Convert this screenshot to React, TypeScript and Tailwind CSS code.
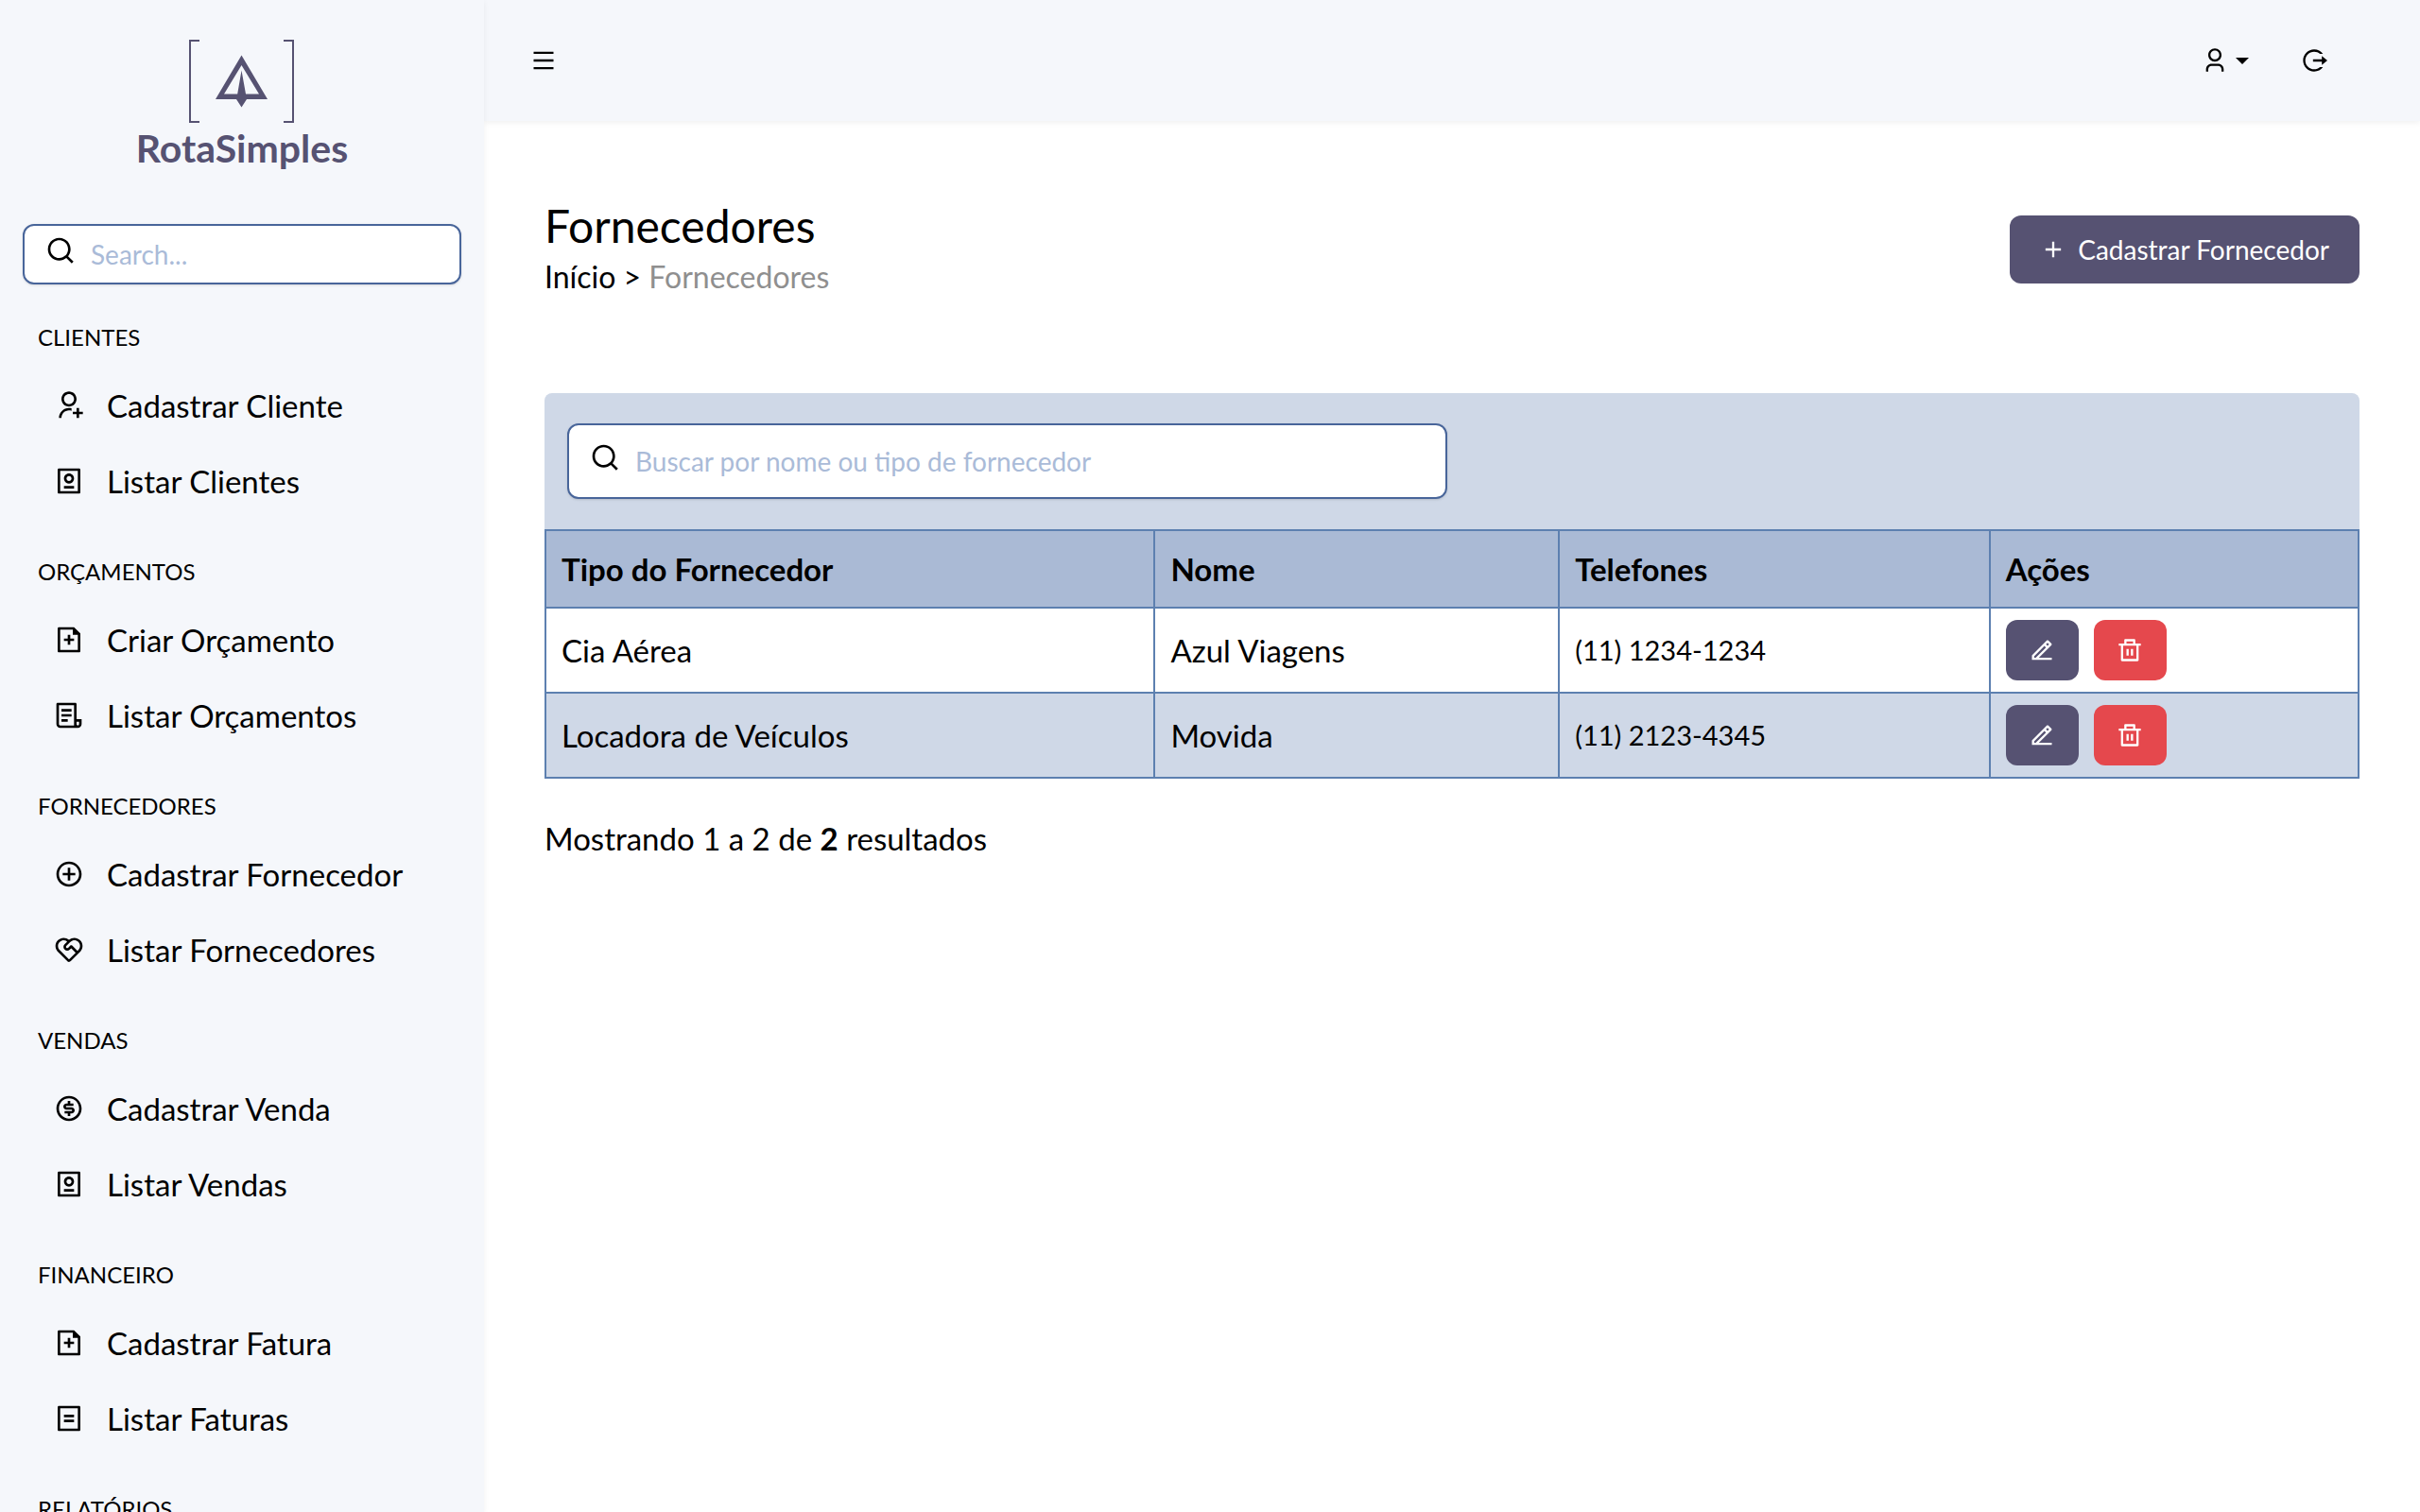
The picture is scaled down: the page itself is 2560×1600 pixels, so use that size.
import { useCallback, useState } from "react";
import type { IconType } from "react-icons";
import {
  RiAddCircleLine,
  RiAddLine,
  RiBillLine,
  RiDeleteBinLine,
  RiEdit2Line,
  RiFileAddLine,
  RiFileList3Line,
  RiLogoutCircleRLine,
  RiMenuLine,
  RiMoneyDollarCircleLine,
  RiPassportLine,
  RiSearchLine,
  RiServiceLine,
  RiUser3Line,
  RiUserAddLine,
} from "react-icons/ri";

type NavItem = { label: string; icon: IconType };

const sections: { title: string; items: NavItem[] }[] = [
  {
    title: "Clientes",
    items: [
      { label: "Cadastrar Cliente", icon: RiUserAddLine },
      { label: "Listar Clientes", icon: RiPassportLine },
    ],
  },
  {
    title: "Orçamentos",
    items: [
      { label: "Criar Orçamento", icon: RiFileAddLine },
      { label: "Listar Orçamentos", icon: RiFileList3Line },
    ],
  },
  {
    title: "Fornecedores",
    items: [
      { label: "Cadastrar Fornecedor", icon: RiAddCircleLine },
      { label: "Listar Fornecedores", icon: RiServiceLine },
    ],
  },
  {
    title: "Vendas",
    items: [
      { label: "Cadastrar Venda", icon: RiMoneyDollarCircleLine },
      { label: "Listar Vendas", icon: RiPassportLine },
    ],
  },
  {
    title: "Financeiro",
    items: [
      { label: "Cadastrar Fatura", icon: RiFileAddLine },
      { label: "Listar Faturas", icon: RiBillLine },
    ],
  },
  { title: "Relatórios", items: [] },
];

const suppliers = [
  { type: "Cia Aérea", name: "Azul Viagens", phone: "(11) 1234-1234" },
  { type: "Locadora de Veículos", name: "Movida", phone: "(11) 2123-4345" },
];

function Logo() {
  return (
    <a href="#" className="flex flex-col items-center text-[#565272]">
      <svg viewBox="0 0 112 88" className="h-[88px] w-28" fill="currentColor" aria-hidden="true">
        <path d="M0 0h11v2H2v84h9v2H0zM111 0h-11v2h9v84h-9v2h11z" />
        <path
          fillRule="evenodd"
          d="M55.500 16.500L83 63H61L55.500 71.500L50 63H28zM55.500 27L37 57.500H51.200L55.500 32.500L60 57.500H74z"
        />
      </svg>
      <span className="text-[41px] leading-[54px] font-bold">RotaSimples</span>
    </a>
  );
}

function SearchBox({ label, className }: { label: string; className: string }) {
  return (
    <label
      className={`flex items-center gap-4 rounded-xl border-2 border-[#48659a] bg-white px-[22px] shadow-sm ${className}`}
    >
      <RiSearchLine className="mb-2 h-8 w-8 shrink-0" />
      <input
        type="text"
        placeholder={label}
        aria-label={label}
        className="min-w-0 flex-1 bg-transparent text-[28px] leading-9 outline-none placeholder:text-[#aabbd8]"
      />
    </label>
  );
}

function Sidebar() {
  return (
    <aside className="z-10 w-lg shrink-0 overflow-hidden bg-[#f5f7fb] px-6 pt-[42px] shadow-[0_2px_6px_rgba(0,0,0,0.06)]">
      <Logo />
      <SearchBox label="Search..." className="mt-[53px] h-16" />
      <nav className="mt-[38px] flex flex-col gap-[38px] pl-4">
        {sections.map((section) => (
          <section key={section.title}>
            <h2 className="mb-3.5 text-2xl leading-9 uppercase">{section.title}</h2>
            <ul>
              {section.items.map(({ label, icon: Icon }) => (
                <li key={label}>
                  <a href="#" className="flex h-20 items-center gap-6 pl-[17px] text-[33px] leading-10">
                    <Icon className="h-8 w-8 shrink-0" />
                    {label}
                  </a>
                </li>
              ))}
            </ul>
          </section>
        ))}
      </nav>
    </aside>
  );
}

function Topbar({ onToggle }: { onToggle: () => void }) {
  return (
    <header className="flex h-32 items-center bg-[#f5f7fb] pr-[98px] pl-[49px] shadow-[0_2px_6px_rgba(0,0,0,0.06)]">
      <button onClick={onToggle} aria-label="Abrir menu">
        <RiMenuLine className="h-7 w-7" />
      </button>
      <button className="ml-auto flex items-center gap-2" aria-label="Conta">
        <RiUser3Line className="h-7 w-7" />
        <svg viewBox="0 0 14 7" className="h-[7px] w-3.5" fill="currentColor" aria-hidden="true">
          <path d="M0 0h14L7 7z" />
        </svg>
      </button>
      <button className="ml-[55px]" aria-label="Sair">
        <RiLogoutCircleRLine className="h-7 w-7" />
      </button>
    </header>
  );
}

function SupplierTable() {
  return (
    <table className="w-full table-fixed border-collapse text-left text-[33px] leading-10 [&_td]:border-2 [&_td]:border-[#5d80b0] [&_td]:px-4 [&_th]:border-2 [&_th]:border-[#5d80b0] [&_th]:px-4">
      <thead>
        <tr className="h-[82px] bg-[#aabad5]">
          <th className="w-[33.6%]">Tipo do Fornecedor</th>
          <th className="w-[22.3%]">Nome</th>
          <th className="w-[23.75%]">Telefones</th>
          <th>Ações</th>
        </tr>
      </thead>
      <tbody>
        {suppliers.map((supplier) => (
          <tr key={supplier.name} className="h-[90px] even:bg-[#cfd8e7]">
            <td>{supplier.type}</td>
            <td>{supplier.name}</td>
            <td className="text-[29px]">{supplier.phone}</td>
            <td>
              <div className="flex gap-4 text-white">
                <button
                  className="flex h-16 w-[77px] items-center justify-center rounded-xl bg-[#565272]"
                  aria-label={`Editar ${supplier.name}`}
                >
                  <RiEdit2Line className="h-7 w-7" />
                </button>
                <button
                  className="flex h-16 w-[77px] items-center justify-center rounded-xl bg-[#e5484d]"
                  aria-label={`Excluir ${supplier.name}`}
                >
                  <RiDeleteBinLine className="h-7 w-7" />
                </button>
              </div>
            </td>
          </tr>
        ))}
      </tbody>
    </table>
  );
}

export default function App() {
  const [sidebarOpen, setSidebarOpen] = useState(true);
  const toggleSidebar = useCallback(() => setSidebarOpen((open) => !open), []);

  return (
    <div className="flex h-screen bg-white font-[Lato,sans-serif] text-black">
      {sidebarOpen && <Sidebar />}

      <div className="flex min-w-0 flex-1 flex-col overflow-y-auto">
        <Topbar onToggle={toggleSidebar} />

        <main className="px-16 pt-[82px]">
          <div className="flex items-center justify-between">
            <div>
              <h1 className="text-5xl leading-[58px]">Fornecedores</h1>
              <nav className="text-[32px] leading-[50px]">
                <a href="#">Início</a> &gt; <span className="text-[#8f8f8f]">Fornecedores</span>
              </nav>
            </div>
            <button className="flex h-[72px] items-center gap-3 rounded-xl bg-[#565272] px-8 text-[28px] leading-9 text-white">
              <RiAddLine className="h-7 w-7" />
              Cadastrar Fornecedor
            </button>
          </div>

          <div className="mt-[98px] rounded-t-lg bg-[#cfd8e7] px-6 py-8">
            <SearchBox label="Buscar por nome ou tipo de fornecedor" className="h-20 w-[49.75%]" />
          </div>
          <SupplierTable />

          <p className="mt-[43px] text-[33px] leading-10">
            Mostrando 1 a 2 de <b>2</b> resultados
          </p>
        </main>
      </div>
    </div>
  );
}
